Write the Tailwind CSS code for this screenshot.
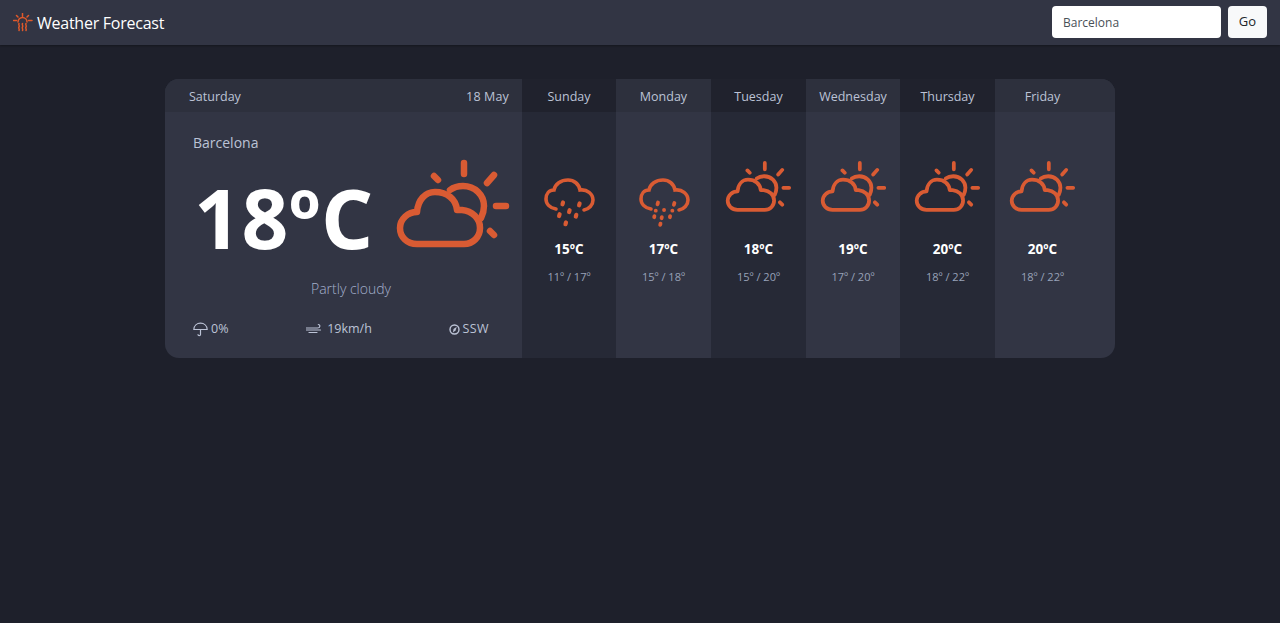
<!doctype html>
<html lang="en">
  <head>
    <meta charset="UTF-8" />
    <title>Weather Forecast</title>
    <script src="https://cdn.jsdelivr.net/npm/@tailwindcss/browser@4"></script>
  </head>
  <body class="bg-[#1e202b] min-h-[623px] font-['Open_Sans',sans-serif] overflow-hidden">
    <!-- header -->
    <header class="h-[45px] bg-[#323544] flex items-center justify-between pl-[13px] pr-[13px] shadow-[0_1px_2px_rgba(0,0,0,0.3)]">
      <div class="flex items-center gap-[4px]">
        <svg class="w-[20px] h-[20px]" viewBox="0 0 20 20" fill="none" stroke="#e0592a" stroke-width="1.500" stroke-linecap="round">
          <path d="M9.500.5v3M3.500 2.500 5 4M15.500 2.500 14 4M.5 7.500h3M15.500 7.500h3.500" />
          <path d="M5 9a4.500 4.500 0 0 1 9 0" />
          <path d="M6 10.500c-1 1 1 2 0 3.500s1 2 0 3.500M9.500 10.500c-1 1 1 2 0 3.500s1 2 0 3.500M13 10.500c-1 1 1 2 0 3.500s1 2 0 3.500" />
        </svg>
        <span class="text-white text-[16px] tracking-[-0.25px] leading-none">Weather Forecast</span>
      </div>
      <form class="flex gap-[7px] mb-[1px]">
        <input type="text" value="Barcelona" class="w-[169px] h-[32px] bg-white rounded-[4px] px-[11px] text-[12px] text-[#495057]" />
        <button type="button" class="w-[39px] h-[32px] bg-[#f8f9fa] rounded-[4px] text-[13px] text-[#212529]">Go</button>
      </form>
    </header>

    <main class="ml-[165px] mt-[34px] w-[950px] h-[279px] rounded-[14px] overflow-hidden flex bg-[#323544]">
      <!-- today -->
      <section class="w-[357px] flex flex-col">
        <div class="h-[33px] pt-[3px] bg-[#2d303d] flex items-center justify-between pl-[24px] pr-[13px] text-[12.500px] text-[#bcc3d6]">
          <span>Saturday</span><span class="tracking-[0.15px]">18 May</span>
        </div>
        <div class="pl-[28px] pt-[21px]">
          <div class="text-[14px] leading-[20px] text-[#bcc3d6]">Barcelona</div>
          <div class="flex items-start mt-[5px] h-[92px]">
            <span class="w-[192px] shrink-0 pt-[18px] pl-[1px] text-white font-bold text-[82px] tracking-[0.5px] leading-none whitespace-nowrap">18ºC</span>
            <svg class="w-[125px] h-[92px] shrink-0" viewBox="0 8 125 92" fill="none" stroke="#d95b33" stroke-linecap="round" stroke-linejoin="round" stroke-width="6.500">
              <path d="M79 13v11M102 33l7-8M111 56h10M105 81l4 4M49 26l4 4" />
              <path d="M32 94H79C88 94 95 87 95 78C95 68 87 61 77 60L72 60C71 49 62 42 50 42C40 42 33 50 32 62C23 62 15 69 15 78C15 87 22 94 32 94Z" />
              <path d="M65 40C69 37 74 36 78 36C90 36 99 45 99 56C99 60 98 64 96 68" />
            </svg>
          </div>
          <div class="mt-[29px] pr-[13px] text-center text-[14px] font-light text-[#a4b0cc] leading-[20px]">Partly cloudy</div>
          <div class="flex items-center justify-between mt-[21px] pr-[33px] text-[12.500px] text-[#bcc3d6]">
            <span class="flex items-center gap-[3px]">
              <svg class="w-[15px] h-[15px]" viewBox="0 0 15 15" fill="none" stroke="#bcc3d6" stroke-width="1.200" stroke-linecap="round">
                <path d="M.8 7.500C1 3.500 4 1.200 7.500 1.200S14 3.500 14.200 7.500M.8 7.500h13.400M7.500 7.500v5c0 1.500-2.500 1.500-2.500 0" />
              </svg>0%</span>
            <span class="flex items-center gap-[5px] ml-[1px]">
              <svg class="w-[16px] h-[12px]" viewBox="0 0 16 12" fill="none" stroke="#bcc3d6" stroke-width="1.200" stroke-linecap="round">
                <path d="M.5 5h11c3 0 3-3.500.8-3.500M.5 7h14M3 9.500h8" />
              </svg>19km/h</span>
            <span class="flex items-center gap-[3px] tracking-[0.4px]">
              <svg class="w-[11px] h-[11px]" viewBox="0 0 11 11" fill="none" stroke="#bcc3d6" stroke-width="1.400">
                <circle cx="5.500" cy="5.500" r="4.500" />
                <path fill="#bcc3d6" stroke="none" d="M7.800 2.800 6.500 6.500 4 8.500l.5-3.500z" />
              </svg>SSW</span>
          </div>
        </div>
      </section>

      <!-- Sunday -->
      <section class="w-[94px] bg-[#262936] flex flex-col items-center">
        <div class="h-[33px] pt-[3px] w-full bg-[#20222d] flex items-center justify-center text-[12.500px] text-[#bcc3d6]">Sunday</div>
        <svg class="w-[54px] h-[54px] mt-[64px]" viewBox="17 11 54 54" fill="none" stroke="#d95b33" stroke-linecap="round">
          <path stroke-width="3.600" d="M31 44C25 43 21 39 21 34C21 29 24 25 29 25C30 19 36 15 43 15C49 15 54 19 55 25C62 24 68 29 68 35C68 40 64 44 59 45" />
          <path stroke-width="4.200" d="M38 37.500l-.5 1.800M54.600 38.500l-.5 1.800M44.600 45.200l-.5 1.800M34.600 49.200l-.5 1.800M51.300 49.800l-.5 1.800M41 57.400l-.5 1.800" />
        </svg>
        <div class="mt-[10px] text-white font-bold text-[13.500px] leading-[18px]">15ºC</div>
        <div class="mt-[12px] text-[11px] text-[#98a2b8] leading-[14px]">11º / 17º</div>
      </section>
      <!-- Monday -->
      <section class="w-[95px] flex flex-col items-center">
        <div class="h-[33px] pt-[3px] w-full bg-[#2d303d] flex items-center justify-center text-[12.500px] text-[#bcc3d6]">Monday</div>
        <svg class="w-[54px] h-[54px] mt-[64px]" viewBox="17 11 54 54" fill="none" stroke="#d95b33" stroke-linecap="round">
          <path stroke-width="3.600" d="M31 44C25 43 21 39 21 34C21 29 24 25 29 25C30 19 36 15 43 15C49 15 54 19 55 25C62 24 68 29 68 35C68 40 64 44 59 45" />
          <path stroke-width="3.800" d="M38 37.500l-.5 1.800M54.400 38l-.5 1.800M44 45h.1M35.700 45.700h.1M52.300 45.700h.1M34.400 51.200l-.2 1M41.800 52.200l-.2 1M50.100 51.200l-.2 1M40.500 58.700l-.3 1.200" />
        </svg>
        <div class="mt-[10px] text-white font-bold text-[13.500px] leading-[18px]">17ºC</div>
        <div class="mt-[12px] text-[11px] text-[#98a2b8] leading-[14px]">15º / 18º</div>
      </section>
      <!-- Tuesday -->
      <section class="w-[95px] bg-[#262936] flex flex-col items-center">
        <div class="h-[33px] pt-[3px] w-full bg-[#20222d] flex items-center justify-center text-[12.500px] text-[#bcc3d6]">Tuesday</div>
        <svg class="w-[72.500px] h-[53.400px] mt-[48px] -ml-[6px]" viewBox="0 8 125 92" fill="none" stroke="#d95b33" stroke-linecap="round" stroke-linejoin="round" stroke-width="6.500">
          <path d="M79 13v11M102 33l7-8M111 56h10M105 81l4 4M49 26l4 4" />
          <path d="M32 94H79C88 94 95 87 95 78C95 68 87 61 77 60L72 60C71 49 62 42 50 42C40 42 33 50 32 62C23 62 15 69 15 78C15 87 22 94 32 94Z" />
          <path d="M65 40C69 37 74 36 78 36C90 36 99 45 99 56C99 60 98 64 96 68" />
        </svg>
        <div class="mt-[26.600px] text-white font-bold text-[13.500px] leading-[18px]">18ºC</div>
        <div class="mt-[12px] text-[11px] text-[#98a2b8] leading-[14px]">15º / 20º</div>
      </section>
      <!-- Wednesday -->
      <section class="w-[94px] flex flex-col items-center">
        <div class="h-[33px] pt-[3px] w-full bg-[#2d303d] flex items-center justify-center text-[12.500px] text-[#bcc3d6]">Wednesday</div>
        <svg class="w-[72.500px] h-[53.400px] mt-[48px] -ml-[6px]" viewBox="0 8 125 92" fill="none" stroke="#d95b33" stroke-linecap="round" stroke-linejoin="round" stroke-width="6.500">
          <path d="M79 13v11M102 33l7-8M111 56h10M105 81l4 4M49 26l4 4" />
          <path d="M32 94H79C88 94 95 87 95 78C95 68 87 61 77 60L72 60C71 49 62 42 50 42C40 42 33 50 32 62C23 62 15 69 15 78C15 87 22 94 32 94Z" />
          <path d="M65 40C69 37 74 36 78 36C90 36 99 45 99 56C99 60 98 64 96 68" />
        </svg>
        <div class="mt-[26.600px] text-white font-bold text-[13.500px] leading-[18px]">19ºC</div>
        <div class="mt-[12px] text-[11px] text-[#98a2b8] leading-[14px]">17º / 20º</div>
      </section>
      <!-- Thursday -->
      <section class="w-[95px] bg-[#262936] flex flex-col items-center">
        <div class="h-[33px] pt-[3px] w-full bg-[#20222d] flex items-center justify-center text-[12.500px] text-[#bcc3d6]">Thursday</div>
        <svg class="w-[72.500px] h-[53.400px] mt-[48px] -ml-[6px]" viewBox="0 8 125 92" fill="none" stroke="#d95b33" stroke-linecap="round" stroke-linejoin="round" stroke-width="6.500">
          <path d="M79 13v11M102 33l7-8M111 56h10M105 81l4 4M49 26l4 4" />
          <path d="M32 94H79C88 94 95 87 95 78C95 68 87 61 77 60L72 60C71 49 62 42 50 42C40 42 33 50 32 62C23 62 15 69 15 78C15 87 22 94 32 94Z" />
          <path d="M65 40C69 37 74 36 78 36C90 36 99 45 99 56C99 60 98 64 96 68" />
        </svg>
        <div class="mt-[26.600px] text-white font-bold text-[13.500px] leading-[18px]">20ºC</div>
        <div class="mt-[12px] text-[11px] text-[#98a2b8] leading-[14px]">18º / 22º</div>
      </section>
      <!-- Friday -->
      <section class="flex-1 flex flex-col">
        <div class="h-[33px] pt-[3px] w-full bg-[#2d303d] flex items-center text-[12.500px] text-[#bcc3d6]"><span class="w-[95px] text-center">Friday</span></div>
        <div class="w-[95px] flex flex-col items-center">
          <svg class="w-[72.500px] h-[53.400px] mt-[48px] -ml-[6px]" viewBox="0 8 125 92" fill="none" stroke="#d95b33" stroke-linecap="round" stroke-linejoin="round" stroke-width="6.500">
            <path d="M79 13v11M102 33l7-8M111 56h10M105 81l4 4M49 26l4 4" />
            <path d="M32 94H79C88 94 95 87 95 78C95 68 87 61 77 60L72 60C71 49 62 42 50 42C40 42 33 50 32 62C23 62 15 69 15 78C15 87 22 94 32 94Z" />
            <path d="M65 40C69 37 74 36 78 36C90 36 99 45 99 56C99 60 98 64 96 68" />
          </svg>
          <div class="mt-[26.600px] text-white font-bold text-[13.500px] leading-[18px]">20ºC</div>
          <div class="mt-[12px] text-[11px] text-[#98a2b8] leading-[14px]">18º / 22º</div>
        </div>
      </section>
    </main>
  </body>
</html>
